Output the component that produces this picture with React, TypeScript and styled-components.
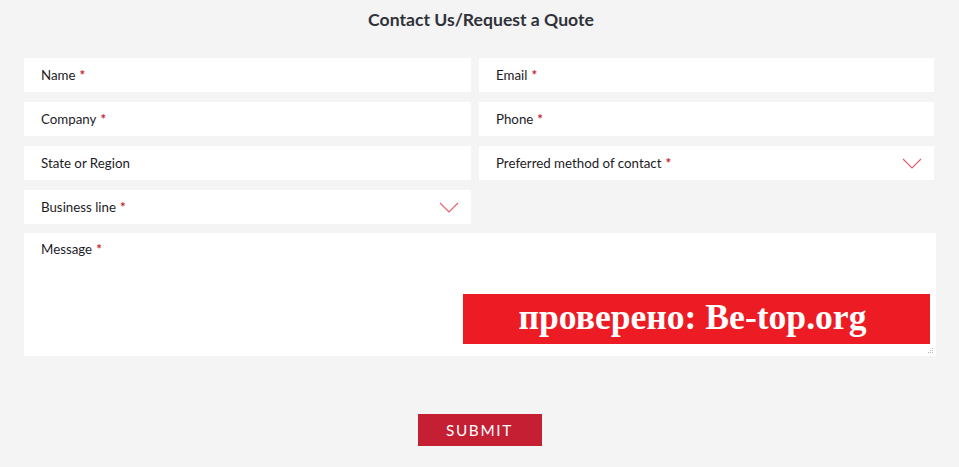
import React from "react";
import styled, { createGlobalStyle } from "styled-components";

const Global = createGlobalStyle`
  html, body { margin: 0; padding: 0; background: #f4f4f4; }
  body { font-family: Lato, "Open Sans", sans-serif; }
`;

const Page = styled.div`
  width: 959px;
  height: 467px;
  background: #f4f4f4;
  box-sizing: border-box;
  padding: 0 25px 0 24px;
  display: flex;
  flex-direction: column;
`;

const Title = styled.h2`
  margin: 0;
  height: 58px;
  padding: 9px 0 0 4px;
  box-sizing: border-box;
  text-align: center;
  font-family: Lato, sans-serif;
  font-weight: 700;
  font-size: 17.6px;
  color: #30323a;
  line-height: 22px;
`;

const Grid = styled.div`
  display: grid;
  grid-template-columns: 447px 455px;
  column-gap: 8px;
  row-gap: 10px;
`;

const Field = styled.div`
  height: 34px;
  background: #fff;
  display: flex;
  align-items: center;
  justify-content: space-between;
  padding: 0 12px 0 17px;
  box-sizing: border-box;
  font-size: 13.3px;
  color: #1c1c28;
`;

const Req = styled.span`
  color: #c41f32;
  margin-left: 4px;
  font-weight: 700;
`;

const MessageWrap = styled.div`
  position: relative;
  margin-top: 9px;
  width: 912px;
  height: 123px;
  background: #fff;
  box-sizing: border-box;
  padding: 8px 17px;
  font-size: 13.3px;
  color: #1c1c28;
`;

const Grip = styled.svg`
  position: absolute;
  right: 2px;
  bottom: 2px;
`;

const Watermark = styled.div`
  position: absolute;
  left: 439px;
  top: 61px;
  width: 467px;
  height: 50px;
  background: #ed1c24;
  color: #fff;
  font-family: "Liberation Serif", serif;
  font-weight: 700;
  font-size: 35.6px;
  display: flex;
  align-items: center;
  justify-content: center;
  padding: 0 8px 4px 0;
  box-sizing: border-box;
`;

const SubmitRow = styled.div`
  display: flex;
  justify-content: center;
  margin-top: 58px;
  padding-left: 1px;
`;

const Submit = styled.button`
  width: 124px;
  height: 32px;
  border: none;
  background: #c41f32;
  color: #fff;
  font-family: Lato, sans-serif;
  font-size: 15.3px;
  letter-spacing: 1.7px;
  padding: 0;
  cursor: pointer;
`;

const Chevron = () => (
  <svg width="20" height="11" viewBox="0 0 20 11">
    <polyline points="1,1 10,10 19,1" fill="none" stroke="#e0606e" strokeWidth="1.2" />
  </svg>
);

const Label: React.FC<{ text: string; req?: boolean }> = ({ text, req }) => (
  <span>
    {text}
    {req && <Req>*</Req>}
  </span>
);

export default function App() {
  return (
    <Page>
      <Global />
      <Title>Contact Us/Request a Quote</Title>
      <Grid>
        <Field><Label text="Name" req /></Field>
        <Field><Label text="Email" req /></Field>
        <Field><Label text="Company" req /></Field>
        <Field><Label text="Phone" req /></Field>
        <Field><Label text="State or Region" /></Field>
        <Field><Label text="Preferred method of contact" req /><Chevron /></Field>
        <Field><Label text="Business line" req /><Chevron /></Field>
      </Grid>
      <MessageWrap>
        <Label text="Message" req />
        <Watermark>проверено: Be-top.org</Watermark>
        <Grip width="7" height="7" viewBox="0 0 7 7">
          <g fill="#b5b5b5">
            <rect x="5" y="1" width="1" height="1" />
            <rect x="3" y="3" width="1" height="1" />
            <rect x="5" y="3" width="1" height="1" />
            <rect x="1" y="5" width="1" height="1" />
            <rect x="3" y="5" width="1" height="1" />
            <rect x="5" y="5" width="1" height="1" />
          </g>
        </Grip>
      </MessageWrap>
      <SubmitRow>
        <Submit>SUBMIT</Submit>
      </SubmitRow>
    </Page>
  );
}
